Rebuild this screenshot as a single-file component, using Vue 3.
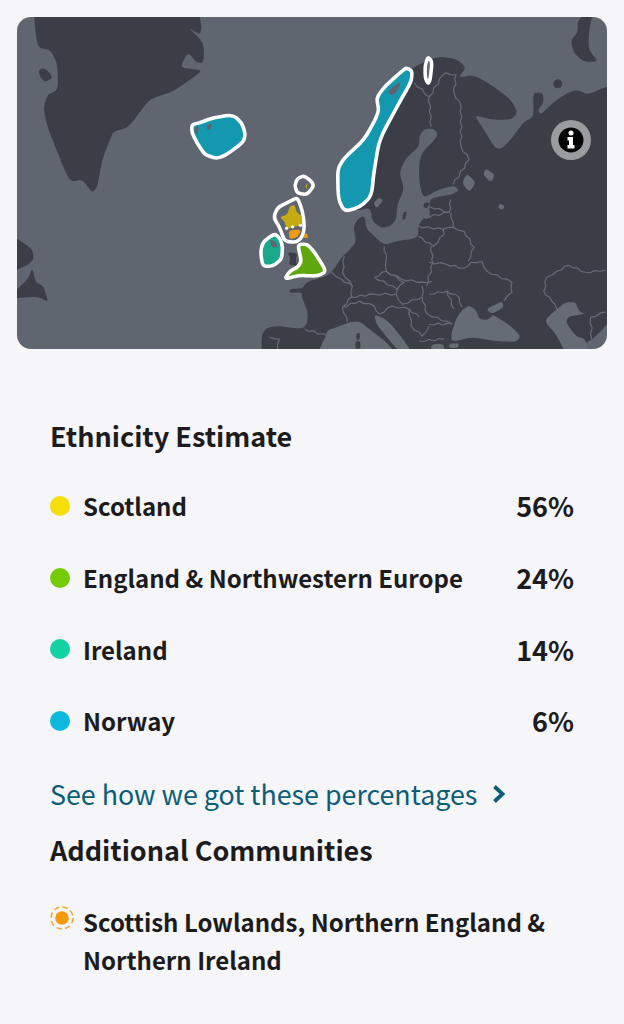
<script setup>
const rows = [
  { name: 'Scotland', pct: '56%', color: '#f5de0a' },
  { name: 'England & Northwestern Europe', pct: '24%', color: '#77cc0a' },
  { name: 'Ireland', pct: '14%', color: '#12d1a3' },
  { name: 'Norway', pct: '6%', color: '#0cb8db' }
]

function pts(s) {
  const n = s.trim().split(/[\s,]+/).map(Number)
  const out = []
  for (let i = 0; i < n.length; i += 2) out.push([n[i], n[i + 1]])
  return out
}
function f(v) { return v.toFixed(1) }
// closed outline whose corners are rounded, keeping its overall size
function smooth(s, r = 0.35) {
  const p = pts(s)
  const toward = (a, b) => [a[0] + (b[0] - a[0]) * r, a[1] + (b[1] - a[1]) * r]
  let d = ''
  p.forEach((c, i) => {
    const a = toward(c, p[(i - 1 + p.length) % p.length])
    const b = toward(c, p[(i + 1) % p.length])
    d += `${i ? 'L' : 'M'}${f(a[0])} ${f(a[1])}Q${f(c[0])} ${f(c[1])} ${f(b[0])} ${f(b[1])}`
  })
  return d + 'Z'
}
// open border line with a small regular wiggle
function wiggle(s) {
  const p = pts(s)
  let d = `M${p[0][0]} ${p[0][1]}`
  for (let i = 1; i < p.length; i++) {
    const [x0, y0] = p[i - 1]
    const [x1, y1] = p[i]
    const len = Math.hypot(x1 - x0, y1 - y0) || 1
    const steps = Math.max(1, Math.round(len / 5))
    for (let k = 1; k <= steps; k++) {
      const t = k / steps
      const o = k === steps ? 0 : (k % 2 ? 0.9 : -0.9)
      d += `L${f(x0 + (x1 - x0) * t - ((y1 - y0) / len) * o)} ${f(y0 + (y1 - y0) * t + ((x1 - x0) / len) * o)}`
    }
  }
  return d
}

const land = smooth('262 362 262 335 268 328 280 327 303 330 308 323 308 312 303 300 302 293 290 294 290 290 303 289 307 283 327 277 333 272 343 257 350 251 357 242 354 228 358 220 365 216 367 229 373 235 385 246 400 241 412 240 419 237 419 226 425 218 427 220 431 217 430 208 431 199 453 195 460 191 455 186 440 190 425 198 422 192 420 180 420 163 423 153 433 143 439 135 435 129 425 129 420 137 420 147 407 158 400 173 405 190 398 205 397 220 392 226 383 229 373 222 371 208 355 212 340 175 350 155 375 130 385 100 410 70 425 62 435 58 445 57 459 60 467 68 459 78 475 75 495 87 512 100 519 113 512 120 492 120 475 115 485 130 495 147 502 150 512 140 525 122 535 117 534 93 544 93 545 103 539 110 542 115 554 103 569 93 579 90 589 95 607 87 625 85 625 365')
const otherLand = [
  '33 5 35 32 38 48 50 50 57 63 58 90 47 95 43 110 48 130 55 147 67 177 72 182 82 180 92 193 97 188 102 160 110 140 113 132 128 128 147 103 153 98 173 92 197 75 202 70 180 68 188 52 197 63 204 63 204 43 188 27 200 35 202 27 197 5',
  '38 70 45 68 53 78 45 82 40 78',
  '5 232 33 250 33 263 5 276',
  '32 268 35 283 43 287 45 293 48 303 37 297 5 300 28 280',
  '579 20 595 8 590 33 590 50 600 62 585 62 575 53 572 40 579 33',
  '288 253 298 254 296 260 298 267 289 265 291 259'
].map(s => smooth(s))
const seas = [
  '316 358 326 338 328 331 338 328 350 323 360 322 370 330 387 343 400 358',
  '375 315 388 321 400 335 414 355 402 355 385 335 377 325',
  '452 335 457 320 462 312 470 306 478 312 480 320 488 321 494 316 498 318 513 328 522 337 517 343 497 342 473 338 453 343',
  '487 310 503 302 505 308 493 315',
  '547 320 558 310 567 303 577 303 580 312 587 315 570 317 567 323 577 337 587 340 590 356 568 356 557 335 548 325',
  '432 345 445 345 445 356 432 356',
  '450 345 460 344 459 349 450 349',
  '468 174 477 183 470 193 463 183',
  '487 169 496 175 492 183 484 175',
  '380 198 384 201 377 209 374 203',
  '501 204 506 207 503 211 499 208'
].map(s => smooth(s))
const islands = [
  '357 334 361 334 360 341 357 341',
  '356 342 361 342 361 350 356 350',
  '404 213 408 212 406 220 403 220',
  '425 203 431 203 428 209 424 208'
].map(s => smooth(s))
const borders = [
  '558 310 553 302 545 292 548 278 558 272 570 266 587 273 600 272 607 271',
  '592 318 607 313',
  '592 318 593 340',
  '430 263 447 265 465 269 472 263 483 262 488 272 513 283 513 293 505 302',
  '430 295 448 292 460 298 463 308',
  '448 292 455 310',
  '430 325 453 325',
  '452 213 454 228 465 232 475 248 469 262',
  '432 247 434 265',
  '419 227 444 230 445 235 434 247 419 237',
  '430 207 450 213 452 200',
  '425 218 450 213',
  '454 228 444 230',
  '447 73 457 75 455 93 462 107 462 147 470 160 454 185',
  '415 83 430 97 432 127',
  '430 97 444 75 447 73',
  '385 247 387 260 387 272',
  '434 263 427 287',
  '387 272 402 280 423 283 433 282',
  '345 257 343 273 353 287 352 298 375 295',
  '375 278 387 272 405 283 398 290 375 278',
  '375 295 397 295 398 290',
  '397 295 403 305 423 298 423 287',
  '332 273 342 280 353 287',
  '353 297 343 308 348 323',
  '343 308 360 302 375 307 380 315',
  '305 330 328 337',
  '270 338 280 340 278 350',
  '380 315 393 307 410 310 420 318',
  '410 310 412 327 423 337 430 327',
  '423 298 428 315 453 325',
  '420 342 445 340'
].map(wiggle)

const blobs = [
  { d: '192 125 200 123 213 118 233 115 242 123 246 135 243 143 227 155 217 159 205 155 197 143 192 133', fill: '#1398b0' },
  { d: '407 68 413 71 412 82 400 103 380 140 375 170 372 197 360 208 345 212 339 200 338 170 345 158 365 140 380 112 377 98 387 85 402 72', fill: '#1398b0' },
  { d: '429 57 433 62 431 80 429 84 426 78 426 65', fill: '#5f6570' },
  { d: '305 176 315 185 308 195 298 194 295 186 298 179', fill: '#5f6570' },
  { d: '298 198 303 212 305 227 303 237 297 243 285 242 280 228 274 218 278 208 290 202', fill: '#5f6570' },
  { d: '275 234 281 240 283 248 282 260 273 267 263 267 261 253 263 243', fill: '#18a88b' },
  { d: '298 245 308 245 315 253 327 272 318 277 300 276 285 280 290 272 298 268 302 262', fill: '#5fa70f' }
].map(b => ({ d: smooth(b.d), fill: b.fill }))
const patches = [
  { d: '194 128 199 126 198 135 195 134', fill: '#5f6570' },
  { d: '207 125 212 124 211 130 207 130', fill: '#5f6570' },
  { d: '397 84 402 82 398 92 392 96 388 92', fill: '#5f6570' },
  { d: '270 240 276 242 278 248 272 248', fill: '#5f6570' },
  { d: '290 207 295 205 297 213 303 217 302 227 295 227 287 230 285 222 280 218 288 215', fill: '#c4ab12' },
  { d: '289 231 302 230 298 238 290 240', fill: '#ee9a0f' },
  { d: '303 238 307 233 309 239', fill: '#ee9a0f' },
  { d: '306 186 308 184 307 190', fill: '#c4ab12' }
].map(b => ({ d: smooth(b.d), fill: b.fill }))
</script>

<template>
  <main class="page">
    <section class="map">
      <svg class="map-art" viewBox="17 17 591 333" aria-hidden="true">
        <rect x="0" y="0" width="640" height="370" fill="#60666f" />
        <path :d="land" fill="#3b3e46" />
        <path v-for="d in otherLand" :key="d" :d="d" fill="#3b3e46" />
        <circle cx="559" cy="84" r="4.5" fill="#3b3e46" />
        <path v-for="d in seas" :key="d" :d="d" fill="#666c76" />
        <path v-for="d in islands" :key="d" :d="d" fill="#3b3e46" />
        <path v-for="d in borders" :key="d" :d="d" fill="none" stroke="#666c76" stroke-width="1.2" stroke-linejoin="round" />
        <path v-for="b in blobs" :key="b.d" :d="b.d" :fill="b.fill" stroke="#fff" stroke-width="3.6" stroke-linejoin="round" />
        <path v-for="b in patches" :key="b.d" :d="b.d" :fill="b.fill" />
        <circle cx="287" cy="229" r="1.6" fill="#fff" />
        <circle cx="293" cy="227.5" r="1.6" fill="#fff" />
        <circle cx="301" cy="226" r="1.6" fill="#fff" />
      </svg>
      <button class="info" type="button" aria-label="Info">
        <svg viewBox="0 0 40 40" width="40" height="40">
          <circle cx="20" cy="20" r="20" fill="#9b9c9f" />
          <circle cx="20" cy="20" r="12.5" fill="#050505" />
          <circle cx="20" cy="13" r="2.5" fill="#fff" />
          <path d="M16.5 17H22V25H23.5V28.5H16.5V25H18V20.5H16.5Z" fill="#fff" />
        </svg>
      </button>
    </section>

    <section class="content">
      <h2 class="title">Ethnicity Estimate</h2>
      <ul class="rows">
        <li v-for="r in rows" :key="r.name" class="row">
          <span class="dot" :style="{ background: r.color }"></span>
          <span class="name">{{ r.name }}</span>
          <span class="pct">{{ r.pct }}</span>
        </li>
      </ul>
      <a class="link">
        See how we got these percentages
        <svg class="chev" viewBox="0 0 14 20" width="14" height="20" aria-hidden="true">
          <path d="M2.5 2.5 10.5 10 2.5 17.5" fill="none" stroke="#0a5e78" stroke-width="3.8" />
        </svg>
      </a>
      <h2 class="title second">Additional Communities</h2>
      <div class="community">
        <svg class="sun" viewBox="0 0 24 24" width="24" height="24" aria-hidden="true">
          <circle cx="12" cy="12" r="6.8" fill="#f79a0e" />
          <circle cx="12" cy="12" r="11" fill="none" stroke="#f3a73a" stroke-width="1.5" stroke-dasharray="5.5 3.14" />
        </svg>
        <span class="community-name">Scottish Lowlands, Northern England &amp; Northern Ireland</span>
      </div>
    </section>
  </main>
</template>

<style>
html, body { margin: 0; background: #f6f5f8; }
</style>

<style scoped>
.page {
  width: 624px;
  height: 1024px;
  overflow: hidden;
  background: #f6f5f8;
  box-sizing: border-box;
  padding: 17px 17px 0;
  font-family: "Noto Sans CJK SC", "Noto Sans", sans-serif;
  color: #1c1c20;
}
.map {
  position: relative;
  width: 590px;
  height: 332px;
  border-radius: 14px;
  overflow: hidden;
}
.map-art { display: block; width: 100%; height: 100%; filter: blur(0.4px); }
.info {
  position: absolute;
  left: 534px;
  top: 103px;
  width: 40px;
  height: 40px;
  padding: 0;
  border: 0;
  background: none;
}
.info svg { display: block; }
.content { padding: 67px 33px 0 33px; }
.title {
  margin: 0;
  font-size: 27px;
  line-height: 40px;
  font-weight: 700;
}
.rows { list-style: none; margin: 14px 0 0; padding: 0; }
.row {
  display: flex;
  align-items: center;
  height: 71.7px;
}
.dot {
  width: 20px;
  height: 20px;
  border-radius: 50%;
  margin-right: 13px;
  flex: none;
}
.name { flex: 1; font-size: 24px; font-weight: 700; }
.pct { font-size: 27px; font-weight: 700; }
.link {
  display: flex;
  align-items: center;
  gap: 15px;
  height: 44px;
  margin-top: 15px;
  font-size: 26.8px;
  color: #0a5e78;
}
.second { margin-top: 14px; }
.community {
  display: flex;
  align-items: flex-start;
  margin-top: 33px;
}
.sun { flex: none; margin: 3px 9px 0 0; }
.community-name {
  font-size: 24px;
  line-height: 38px;
  font-weight: 700;
  width: 480px;
}
</style>
